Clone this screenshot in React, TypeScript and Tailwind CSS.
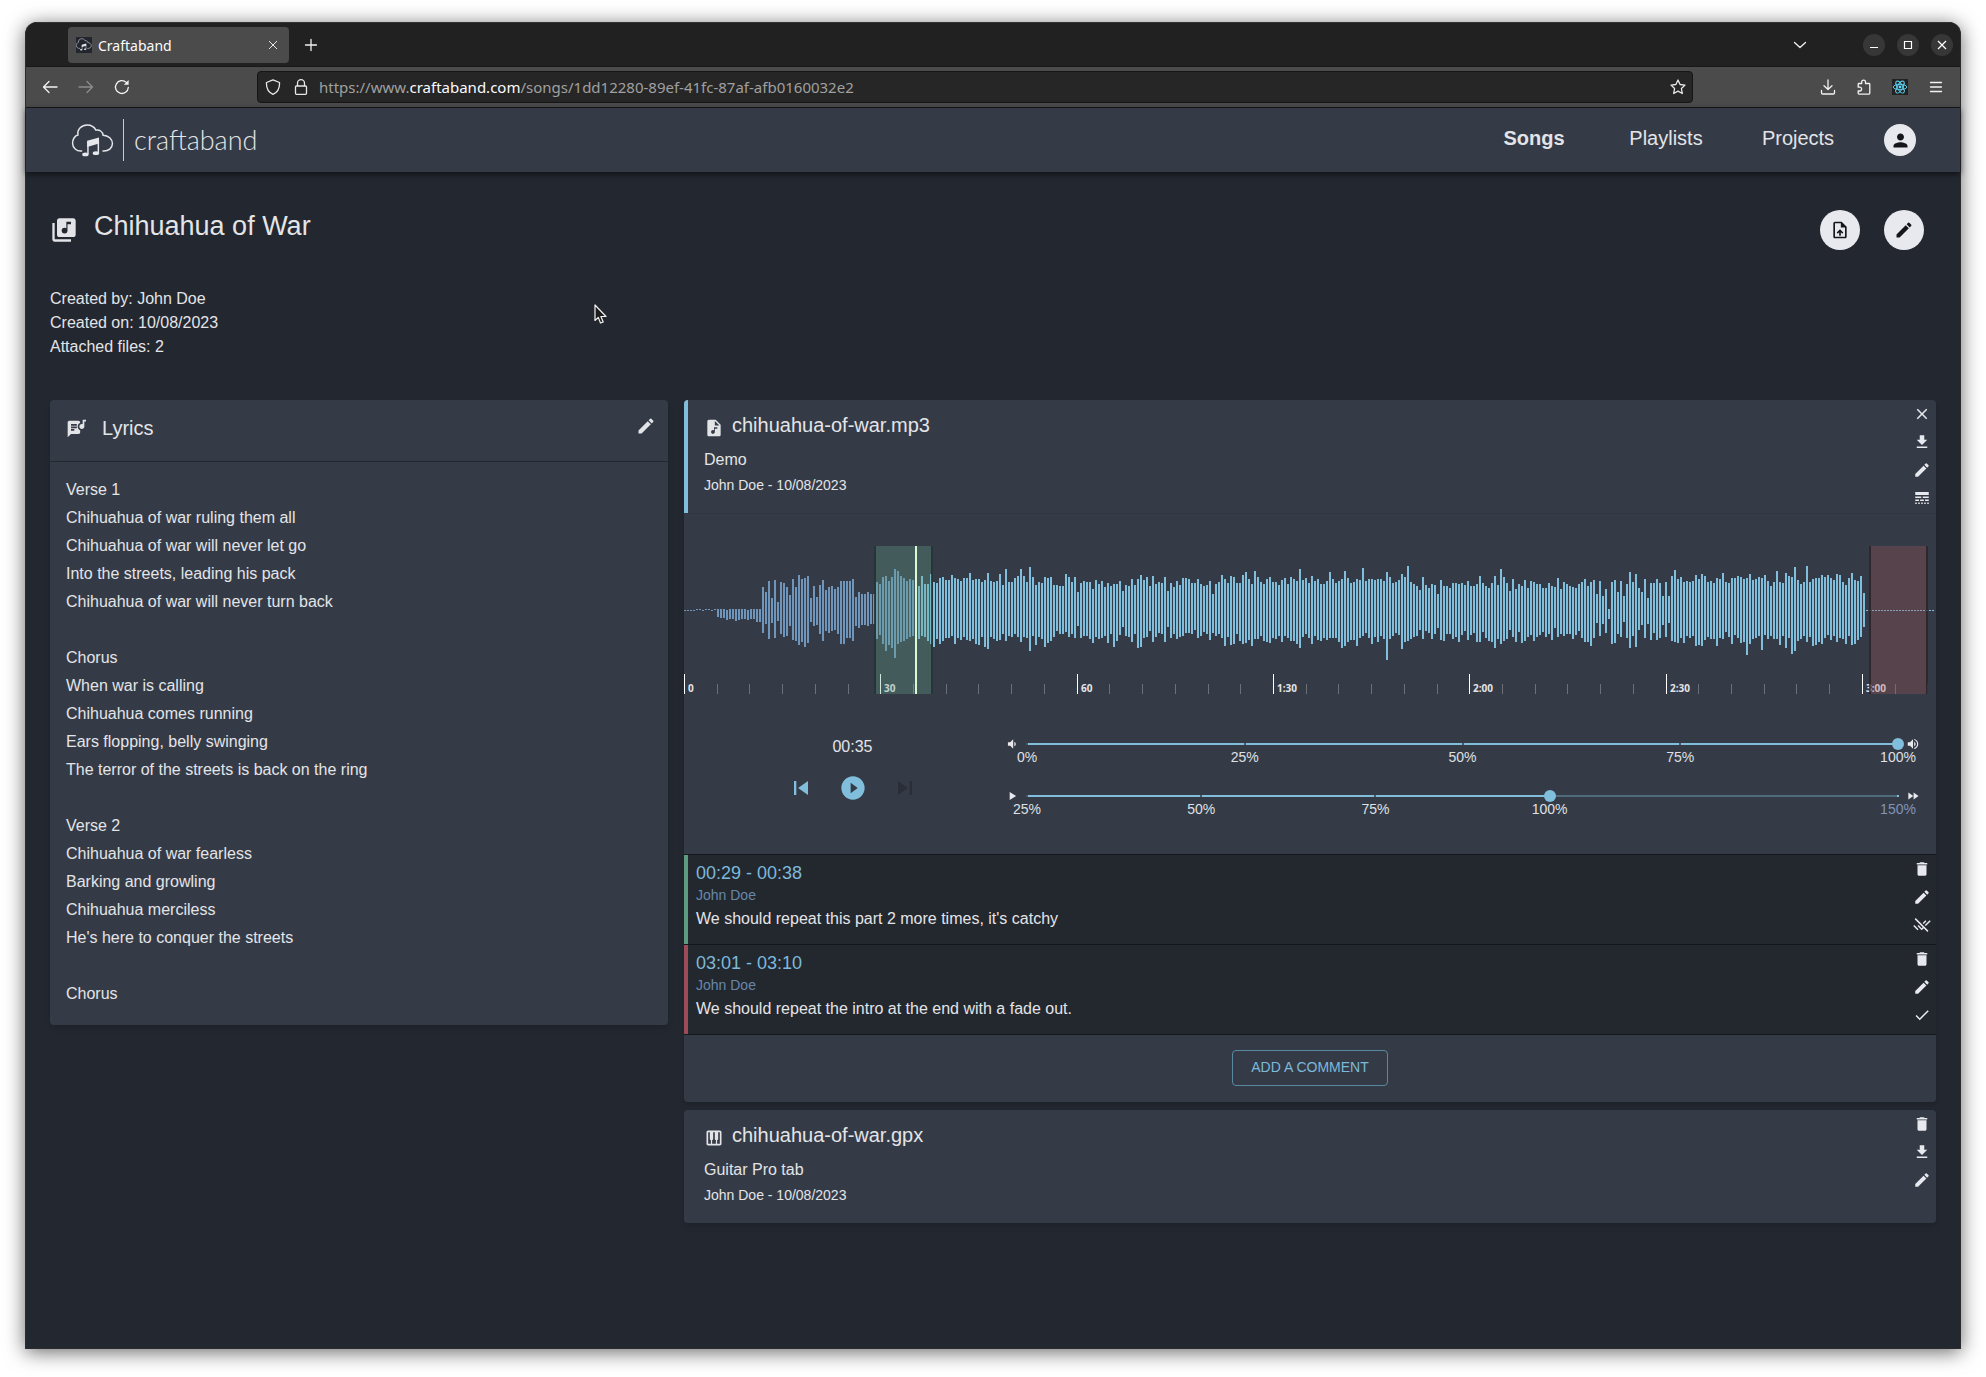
import { useState, type ReactNode } from 'react'
import {
  MdAudioFile,
  MdCheck,
  MdClose,
  MdDelete,
  MdEdit,
  MdFastForward,
  MdFileDownload,
  MdLibraryMusic,
  MdLineStyle,
  MdLyrics,
  MdPerson,
  MdPiano,
  MdPlayArrow,
  MdPlayCircleFilled,
  MdRemoveDone,
  MdSkipNext,
  MdSkipPrevious,
  MdUploadFile,
  MdVolumeDown,
  MdVolumeUp,
} from 'react-icons/md'

const lyrics = [
  'Verse 1',
  'Chihuahua of war ruling them all',
  'Chihuahua of war will never let go',
  'Into the streets, leading his pack',
  'Chihuahua of war will never turn back',
  '',
  'Chorus',
  'When war is calling',
  'Chihuahua comes running',
  'Ears flopping, belly swinging',
  'The terror of the streets is back on the ring',
  '',
  'Verse 2',
  'Chihuahua of war fearless',
  'Barking and growling',
  'Chihuahua merciless',
  "He's here to conquer the streets",
  '',
  'Chorus',
]

// alternating up / down amplitude of each bar
const peaks = [
  0, 1, 0, 1, 0, 1, 0, 1, 1, 0, 1, 0, 0, 1, 1, 0, 1, 0, 0, 1, 1, 0,
  1, 7, 1, 8, 1, 8, 0, 10, 1, 9, 1, 9, 1, 11, 1, 10, 1, 9, 1, 9, 0, 10, 1, 9, 1, 9, 1, 12, 1, 12,
  23, 23, 18, 14, 29, 29, 12, 13, 30, 28, 8, 11, 28, 24, 27, 27, 23, 26, 15, 16,
  31, 30, 23, 31, 35, 35, 31, 32, 32, 37, 34, 33, 12, 12, 24, 16, 13, 15, 25, 24,
  30, 31, 20, 21, 23, 23, 24, 21, 21, 20, 23, 24, 29, 34, 29, 34, 29, 28, 29, 28, 31, 31,
  13, 16, 18, 18, 16, 15, 16, 15, 18, 16, 16, 14, 16, 14,
  28, 29, 26, 25, 33, 34, 34, 41, 29, 35, 33, 38, 41, 48, 39, 34, 34, 32, 32, 31, 29, 29, 31, 27, 30, 26, 29, 28,
  24, 29, 34, 26, 26, 27, 26, 31, 36, 34, 28, 37, 27, 29, 32, 34, 33, 31, 30, 28, 30, 28, 35, 26, 32, 34, 31, 28,
  29, 30, 32, 27, 32, 30, 37, 31, 30, 29, 31, 34, 31, 35, 28, 27, 30, 37, 37, 39, 29, 27, 28, 29, 29, 31, 36, 30,
  25, 24, 41, 31, 28, 26, 28, 27, 32, 24, 34, 27, 41, 32, 34, 27, 28, 28, 43, 41, 33, 26, 25, 35, 28, 27, 27, 29,
  33, 37, 32, 33, 33, 31, 25, 27, 25, 21, 24, 24, 24, 24, 36, 22, 33, 27, 28, 24, 33, 28, 18, 16, 27, 28, 29, 26,
  28, 26, 28, 29, 21, 33, 30, 27, 26, 29,
  29, 28, 23, 26, 27, 33, 24, 24, 26, 37, 26, 31, 29, 25, 19, 17, 25, 26, 24, 27, 31, 32, 25, 24, 31, 38, 35, 37,
  30, 28, 33, 27, 24, 21, 34, 32, 26, 27, 28, 23, 27, 24, 33, 32, 19, 17, 27, 28, 23, 24, 29, 29, 25, 27, 32, 26,
  32, 23, 31, 23, 27, 24, 27, 20, 31, 28, 26, 26, 24, 22, 25, 24, 29, 30, 16, 23, 26, 26, 28, 24, 35, 28, 31, 36,
  27, 27, 34, 35, 33, 34, 27, 24, 27, 31, 35, 34, 38, 33, 31, 30, 26, 36, 39, 29, 33, 29, 28, 26, 26, 31, 31, 32,
  33, 33, 28, 28, 28, 29, 25, 26, 30, 32, 32, 26, 26, 28, 33, 31, 31, 31, 29, 34, 41, 38, 30, 27, 32, 24, 27, 28,
  34, 34, 29, 26, 31, 30, 26, 31, 26, 28, 29, 30, 38, 28, 31, 28, 27, 28, 29, 32, 31, 38, 39, 36, 32, 32, 27, 30,
  28, 30, 31, 36, 30, 28, 42, 26, 29, 23, 31, 28, 31, 34, 30, 27, 31, 32, 31, 26, 29, 29, 38, 50, 33, 29, 27, 26,
  28, 23, 30, 25, 36, 39, 33, 32, 44, 31, 28, 29, 26, 27, 24, 26, 20, 20, 33, 29, 25, 21, 22, 23, 26, 29, 25, 24,
  16, 18, 30, 30, 24, 31, 24, 24, 22, 24, 27, 29, 27, 27, 26, 32, 27, 25, 25, 21, 29, 30, 24, 25, 24, 23, 26, 32,
  34, 32, 27, 22, 24, 28, 22, 31, 27, 32, 34, 38, 25, 29, 41, 34, 33, 31, 27, 29, 19, 20, 31, 27, 21, 32, 26, 22,
  24, 33, 30, 31, 22, 27, 29, 25, 28, 31, 26, 27, 26, 25, 22, 22, 22, 27, 27, 24, 24, 30, 23, 18, 32, 27, 21, 24,
  28, 26, 26, 24, 24, 24, 23, 29, 22, 25, 26, 21, 28, 28, 31, 32, 24, 32, 28, 36, 30, 28, 16, 13, 29, 26, 14, 14,
  21, 23, 1, 9, 28, 34, 30, 33, 18, 24, 29, 27, 14, 12, 26, 28, 38, 38, 28, 26, 36, 37, 22, 20, 18, 15, 31, 28,
  12, 14, 27, 30, 27, 23, 31, 30, 27, 28, 14, 15, 28, 27, 14, 13, 34, 31, 40, 32, 31, 33, 33, 28, 28, 33, 29, 26,
  28, 28, 29, 26, 35, 36, 31, 35, 36, 36, 34, 30, 28, 27, 29, 29, 27, 29, 32, 36, 31, 28, 37, 29, 28, 22, 27, 27,
  32, 34, 32, 25, 34, 28, 33, 33, 31, 32, 32, 45, 36, 34, 30, 29, 31, 28, 33, 26, 32, 40, 35, 25, 29, 29, 24, 26,
  28, 29, 39, 29, 28, 35, 27, 26, 37, 38, 34, 28, 33, 44, 43, 41, 30, 31, 26, 29, 28, 26, 44, 32, 28, 27, 31, 36,
  32, 35, 32, 32, 35, 34, 33, 28, 35, 25, 32, 30, 30, 26, 36, 32, 35, 28, 28, 29, 25, 34, 32, 26, 37, 35, 30, 34,
  29, 30, 34, 27, 17, 17,
]

const BAR_COUNT = 417
const PLAYED_BARS = 77
const timeLabels = ['0', '30', '60', '1:30', '2:00', '2:30', '3:00']

function Waveform() {
  const bars = Array.from({ length: BAR_COUNT }, (_, i) => [peaks[i * 2] ?? 0, peaks[i * 2 + 1] ?? 1])
  const ticks = Array.from({ length: 39 }, (_, i) => i)

  return (
    <svg viewBox="0 0 1252 148" className="block w-full" role="img" aria-label="Waveform" shapeRendering="crispEdges">
      {bars.map(([up, down], i) => (
        <rect key={i} x={i * 3} y={64 - up} width={2} height={up + down} fill={i < PLAYED_BARS ? '#6f95ba' : '#80bedb'} />
      ))}
      {ticks.map((i) => {
        const major = i % 6 === 0
        const x = Math.round(i * 32.72)
        return (
          <rect
            key={i}
            x={x}
            y={major ? 128 : 138}
            width={1}
            height={major ? 20 : 10}
            fill={major ? '#ffffff' : '#6d7078'}
          />
        )
      })}
      {timeLabels.map((label, i) => (
        <text key={label} x={Math.round(i * 196.33) + 4} y={146} fill="#e3e4e8" className="font-['Open_Sans',sans-serif] text-[10px] font-bold">
          {label}
        </text>
      ))}
      <rect x={190} y={0} width={59} height={148} fill="#64a88f" opacity={0.3} />
      <rect x={190} y={0} width={2} height={148} fill="#1f2d2f" opacity={0.8} />
      <rect x={247} y={0} width={2} height={148} fill="#1f2d2f" opacity={0.8} />
      <rect x={1185} y={0} width={59} height={148} fill="#a3555a" opacity={0.3} />
      <rect x={1185} y={0} width={2} height={148} fill="#211a1f" opacity={0.7} />
      <rect x={1242} y={0} width={2} height={148} fill="#211a1f" opacity={0.7} />
      <rect x={231} y={0} width={2} height={148} fill="#dcf7d4" />
    </svg>
  )
}

function CloudLogo({ className }: { className?: string }) {
  return (
    <svg viewBox="0 -1 44 36" className={className} fill="none" stroke="#e6e7eb" strokeWidth={1.5} aria-hidden="true">
      <path
        d="M10.300 27.800C5 28.300 1 24.500 1 19.800 1 15.500 3.500 12 6.500 11.300 5.500 5.500 10.500 1 16 1c4.500 0 7.500 2.300 9 5.300 3.500-.8 7 1.500 7.300 5.200 5.500.3 9.700 4 9.700 8.700 0 4.500-4 8-9.700 7.600"
        strokeLinecap="round"
      />
      <path d="M16 17.300 28.200 14v6.200L16 23.600z" fill="#e6e7eb" stroke="none" />
      <path d="M16.800 18v13M27.500 17v13" />
      <ellipse cx="14.200" cy="31.300" rx="3.300" ry="1.900" fill="#e6e7eb" stroke="none" />
      <ellipse cx="25" cy="30" rx="3.300" ry="1.900" fill="#e6e7eb" stroke="none" />
    </svg>
  )
}

type ChromeButtonProps = { label: string; children: ReactNode; className?: string; color?: string }

function ChromeButton({ label, children, className = '', color = 'text-[#f2f2f2]' }: ChromeButtonProps) {
  return (
    <button aria-label={label} className={`flex size-9 items-center justify-center ${color} ${className}`}>
      <svg width="16" height="16" viewBox="0 0 16 16" fill="none" stroke="currentColor" strokeWidth="1.3" strokeLinecap="round" strokeLinejoin="round">
        {children}
      </svg>
    </button>
  )
}

function WindowButton({ label, children }: { label: string; children: ReactNode }) {
  return (
    <button aria-label={label} className="flex size-[22px] items-center justify-center rounded-full bg-[#373737] text-white">
      <svg width="10" height="10" viewBox="0 0 10 10" fill="none" stroke="currentColor" strokeWidth="1.2">
        {children}
      </svg>
    </button>
  )
}

function TabBar() {
  return (
    <div className="flex h-11 items-center border-t border-[#333333] bg-[#212121] pt-px pr-[7px] pl-[42px]">
      <div className="flex h-9 w-[221px] items-center rounded bg-[#4b4b4b] pr-2 pl-2">
        <span className="mr-1.5 flex size-4 items-center justify-center bg-[#22272f]">
          <CloudLogo className="w-4" />
        </span>
        <span className="flex-1 text-[14px] text-[#fbfbfe]">Craftaband</span>
        <button aria-label="Close tab" className="flex size-4 items-center justify-center text-[#e8e8e8]">
          <svg width="8" height="8" viewBox="0 0 8 8" stroke="currentColor">
            <path d="M0 0l8 8M8 0L0 8" />
          </svg>
        </button>
      </div>
      <ChromeButton label="New tab" className="ml-1">
        <path d="M8 2.500v11M2.500 8h11" />
      </ChromeButton>
      <ChromeButton label="List all tabs" className="mr-[45px] ml-auto">
        <path d="M2.500 5.500 8 10.500l5.500-5" />
      </ChromeButton>
      <div className="flex gap-3">
        <WindowButton label="Minimize">
          <path d="M1 7.500h8" />
        </WindowButton>
        <WindowButton label="Maximize">
          <path d="M1.500 1.500h7v7h-7z" />
        </WindowButton>
        <WindowButton label="Close">
          <path d="M1 1l8 8M9 1L1 9" />
        </WindowButton>
      </div>
    </div>
  )
}

function AddressBar() {
  return (
    <div className="flex h-[42px] items-center border-y border-[#181818] bg-[#4b4b4b] pr-1.5 pl-1.5">
      <ChromeButton label="Back">
        <path d="M15 8H1.500M7 2.500 1.500 8 7 13.500" />
      </ChromeButton>
      <ChromeButton label="Forward" color="text-[#8c8c8c]">
        <path d="M1 8h13.500M9 2.500 14.500 8 9 13.500" />
      </ChromeButton>
      <ChromeButton label="Reload">
        <path d="M14.300 8.500A6.400 6.400 0 1 1 12.300 3.400" />
        <path d="M14.600 1v4.800H9.800z" fill="currentColor" stroke="none" />
      </ChromeButton>
      <div className="mr-[117px] ml-[117px] flex h-8 flex-1 items-center rounded border border-[#161616] bg-[#262626] pr-1 pl-[7px] text-[#e8e8e8]">
        <svg width="16" height="16" viewBox="0 0 16 16" fill="none" stroke="currentColor" strokeWidth="1.300" strokeLinejoin="round" aria-hidden="true">
          <path d="M8 .8 14.500 3.500C14.800 8.500 13 13 8 15.300 3 13 1.200 8.500 1.500 3.500z" />
        </svg>
        <svg width="16" height="16" viewBox="0 0 16 16" fill="none" stroke="currentColor" strokeWidth="1.300" className="ml-3" aria-hidden="true">
          <rect x="2.500" y="7" width="11" height="8.300" rx="1" />
          <path d="M4.500 7V4.200a3.500 3.500 0 0 1 7 0V7" />
        </svg>
        <p className="ml-2.5 min-w-0 flex-1 truncate text-[15px] text-[#a0a0a0]">
          https://www.<span className="text-[#fbfbfe]">craftaband.com</span>/songs/1dd12280-89ef-41fc-87af-afb0160032e2
        </p>
        <button aria-label="Bookmark this page" className="flex size-5 items-center justify-center">
          <svg width="16" height="16" viewBox="0 0 16 16" fill="none" stroke="currentColor" strokeWidth="1.300" strokeLinejoin="round">
            <path d="M8 1l2.100 4.500 4.900.6-3.600 3.400.9 5L8 12.100 3.700 14.500l.9-5L1 6.100l4.900-.6z" />
          </svg>
        </button>
      </div>
      <ChromeButton label="Downloads">
        <path d="M8 1v9.500M4 6.800 8 10.500l4-3.700M1.500 11.500v2.300c0 .7.500 1.200 1.200 1.200h10.600c.7 0 1.200-.5 1.200-1.200v-2.300" />
      </ChromeButton>
      <ChromeButton label="Extensions">
        <path d="M2.500 4.500h3.200V3a1.900 1.900 0 0 1 3.800 0v1.500H13c.5 0 .8.300.8.800v9c0 .500-.3.800-.8.800H3c-.5 0-.8-.3-.8-.8V12h1.500a1.900 1.900 0 0 0 0-3.800H2.200V4.800" />
      </ChromeButton>
      <button aria-label="React Developer Tools" className="flex size-9 items-center justify-center">
        <svg width="16" height="16" viewBox="0 0 16 16" fill="none" stroke="#61dafb" strokeWidth=".9">
          <rect width="16" height="16" fill="#222222" stroke="none" />
          <ellipse cx="8" cy="8" rx="6.800" ry="2.700" />
          <ellipse cx="8" cy="8" rx="6.800" ry="2.700" transform="rotate(60 8 8)" />
          <ellipse cx="8" cy="8" rx="6.800" ry="2.700" transform="rotate(120 8 8)" />
          <circle cx="8" cy="8" r="1.400" fill="#61dafb" stroke="none" />
        </svg>
      </button>
      <ChromeButton label="Open menu">
        <path d="M2.500 3.500h11M2.500 8h11M2.500 12.500h11" />
      </ChromeButton>
    </div>
  )
}

function Navbar() {
  return (
    <header className="relative flex h-16 items-center justify-between bg-[#353b46] pr-11 pl-[45px] shadow-[0_2px_6px_rgba(0,0,0,0.6)]">
      <a href="#" className="flex items-center">
        <CloudLogo className="h-[35px] w-11" />
        <span className="mr-2.5 ml-2 h-[42px] w-px bg-[#c9cbd0]" />
        <span className="font-['Lato',sans-serif] text-[27px] leading-8 font-light text-[#e3e4e8]">craftaband</span>
      </a>
      <div className="flex items-center">
        <nav className="flex pb-1 text-xl leading-6 text-[#e3e4e8]">
          <a href="#" className="w-[132px] text-center font-bold">Songs</a>
          <a href="#" className="w-[132px] text-center">Playlists</a>
          <a href="#" className="w-[132px] text-center">Projects</a>
        </nav>
        <button aria-label="Account" className="ml-5 flex size-8 items-center justify-center rounded-full bg-[#e8e9ee] text-[#14161a]">
          <MdPerson size={21} />
        </button>
      </div>
    </header>
  )
}

function IconButton({ label, children }: { label: string; children: ReactNode }) {
  return (
    <button aria-label={label} className="flex size-7 items-center justify-center text-lg text-[#e8e9ee]">
      {children}
    </button>
  )
}

function RoundButton({ label, children }: { label: string; children: ReactNode }) {
  return (
    <button aria-label={label} className="flex size-10 items-center justify-center rounded-full bg-[#e8e9ee] text-xl text-[#14161a]">
      {children}
    </button>
  )
}

type SliderProps = {
  label: string
  min: number
  max: number
  marks: number[]
  initial: number
  before: ReactNode
  after: ReactNode
}

function MarkedSlider({ label, min, max, marks, initial, before, after }: SliderProps) {
  const [value, setValue] = useState(initial)
  const percent = (n: number) => `${((n - min) / (max - min)) * 100}%`

  return (
    <div className="flex gap-2 text-sm leading-[14px] text-[#e8e9ee]">
      <span className="flex h-3 items-center">{before}</span>
      <div className="flex-1">
        <div className="relative h-3">
          <div className="absolute inset-x-0 top-[5px] h-0.5 bg-[#4f697d]" />
          <div className="absolute top-[5px] left-0 h-0.5 bg-[#80bedb]" style={{ width: percent(value) }} />
          {marks.map((mark) => (
            <span
              key={mark}
              className={`absolute top-[5px] h-0.5 w-0.5 -translate-x-1/2 ${mark > value ? 'bg-[#80bedb]' : 'bg-[#4a5767]'}`}
              style={{ left: percent(mark) }}
            />
          ))}
          <input
            type="range"
            aria-label={label}
            min={min}
            max={max}
            value={value}
            onChange={(e) => setValue(Number(e.target.value))}
            className="absolute top-0 -left-1.5 h-3 w-[calc(100%+12px)] cursor-pointer appearance-none bg-transparent [&::-webkit-slider-thumb]:size-3 [&::-webkit-slider-thumb]:appearance-none [&::-webkit-slider-thumb]:rounded-full [&::-webkit-slider-thumb]:bg-[#80bedb]"
          />
        </div>
        <div className="relative h-[14px]">
          {marks.map((mark) => (
            <span
              key={mark}
              className={`absolute -translate-x-1/2 ${mark > value ? 'text-[#8093b8]' : 'text-[#dfe0e4]'}`}
              style={{ left: percent(mark) }}
            >
              {mark}%
            </span>
          ))}
        </div>
      </div>
      <span className="flex h-3 items-center">{after}</span>
    </div>
  )
}

type FileHeaderProps = { icon: ReactNode; name: string; type: string; active?: boolean; children: ReactNode }

function FileHeader({ icon, name, type, active, children }: FileHeaderProps) {
  return (
    <div className={`flex justify-between rounded-t ${active ? 'border-l-4 border-[#80bedb] pl-4' : 'pl-5'}`}>
      <div className="pt-3 pb-[18px]">
        <h2 className="flex items-center gap-2 text-xl leading-[26px]">
          <span className="pt-1.5">{icon}</span>
          {name}
        </h2>
        <p className="mt-2.5 leading-6">{type}</p>
        <p className="mt-[3px] text-sm leading-5">John Doe - 10/08/2023</p>
      </div>
      <div className="flex flex-col">{children}</div>
    </div>
  )
}

function Comment({ time, text, color, resolve }: { time: string; text: string; color: string; resolve: ReactNode }) {
  return (
    <li className="flex justify-between border-t border-[#14171b] bg-[#23272e]">
      <div className={`border-l-4 pt-1.5 pb-[13px] pl-2 ${color}`}>
        <p className="text-lg leading-6 text-[#7cb9da]">{time}</p>
        <p className="text-sm leading-5 text-[#6787aa]">John Doe</p>
        <p className="mt-0.5 leading-6">{text}</p>
      </div>
      <div className="flex flex-col">
        <IconButton label="Delete comment"><MdDelete /></IconButton>
        <IconButton label="Edit comment"><MdEdit /></IconButton>
        {resolve}
      </div>
    </li>
  )
}

function Player() {
  return (
    <div className="border-t border-[#31353f] pt-8">
      <Waveform />
      <div className="grid grid-cols-4 px-4 pt-[41px] pb-[38px]">
        <div className="flex flex-col items-center">
          <span className="leading-6">00:35</span>
          <div className="mt-[15px] flex gap-6 text-[28px] text-[#80bedb]">
            <button aria-label="Previous"><MdSkipPrevious /></button>
            <button aria-label="Play"><MdPlayCircleFilled /></button>
            <button aria-label="Next" disabled className="text-[#2a2e38]"><MdSkipNext /></button>
          </div>
        </div>
        <div className="col-span-3 flex flex-col gap-[26px] pt-[3px]">
          <MarkedSlider
            label="Volume"
            min={0}
            max={100}
            marks={[0, 25, 50, 75, 100]}
            initial={100}
            before={<MdVolumeDown />}
            after={<MdVolumeUp />}
          />
          <MarkedSlider
            label="Playback speed"
            min={25}
            max={150}
            marks={[25, 50, 75, 100, 150]}
            initial={100}
            before={<MdPlayArrow />}
            after={<MdFastForward />}
          />
        </div>
      </div>
    </div>
  )
}

export default function App() {
  return (
    <div className="flex min-h-screen bg-white px-[25px] pt-[22px] pb-7">
      <div className="relative flex flex-1 flex-col rounded-t-xl border-x border-b border-[#2b2c30] bg-[#23272f] font-['Liberation_Sans',Arial,sans-serif] text-[#e3e4e8] shadow-[0_3px_20px_rgba(0,0,0,0.6)]">
        <div className="overflow-hidden rounded-t-xl font-['Noto_Sans',sans-serif]">
          <TabBar />
          <AddressBar />
        </div>
        <Navbar />

        <main className="px-6 pt-[38px] pb-12">
          <div className="flex items-center justify-between pr-3">
            <h1 className="flex items-center gap-4 text-[27px] leading-8">
              <MdLibraryMusic size={28} />
              <span className="pb-2">Chihuahua of War</span>
            </h1>
            <div className="flex gap-6">
              <RoundButton label="Upload file"><MdUploadFile /></RoundButton>
              <RoundButton label="Edit song"><MdEdit /></RoundButton>
            </div>
          </div>

          <div className="mt-[37px] leading-6">
            <p>Created by: John Doe</p>
            <p>Created on: 10/08/2023</p>
            <p>Attached files: 2</p>
          </div>

          <div className="mt-[41px] grid grid-cols-3 items-start gap-4">
            {/* Lyrics */}
            <section className="rounded bg-[#353b46] shadow-md">
              <div className="flex items-center justify-between border-b border-[#23272f] pt-3 pr-2 pb-[17px] pl-4">
                <h2 className="flex items-center gap-4 text-xl leading-8">
                  <span className="pt-0.5">
                    <MdLyrics size={20} />
                  </span>
                  Lyrics
                </h2>
                <button aria-label="Edit lyrics" className="mb-1 flex size-7 items-center justify-center text-xl">
                  <MdEdit />
                </button>
              </div>
              <div className="px-4 pt-[14px] pb-[17px]">
                {lyrics.map((line, i) => (
                  <p key={i} className="h-7 leading-7">{line}</p>
                ))}
              </div>
            </section>

            {/* Files */}
            <div className="col-span-2 flex flex-col gap-2">
              <section className="rounded bg-[#353b46] shadow-md">
                <FileHeader icon={<MdAudioFile />} name="chihuahua-of-war.mp3" type="Demo" active>
                  <IconButton label="Close file"><MdClose /></IconButton>
                  <IconButton label="Download"><MdFileDownload /></IconButton>
                  <IconButton label="Edit file"><MdEdit /></IconButton>
                  <IconButton label="Toggle comments"><MdLineStyle /></IconButton>
                </FileHeader>
                <Player />
                <ul>
                  <Comment
                    time="00:29 - 00:38"
                    text="We should repeat this part 2 more times, it's catchy"
                    color="border-[#5d9c83]"
                    resolve={<IconButton label="Reopen"><MdRemoveDone /></IconButton>}
                  />
                  <Comment
                    time="03:01 - 03:10"
                    text="We should repeat the intro at the end with a fade out."
                    color="border-[#9d4b59]"
                    resolve={<IconButton label="Resolve"><MdCheck /></IconButton>}
                  />
                </ul>
                <div className="flex justify-center border-t border-[#14171b] pt-[15px] pb-4">
                  <button className="h-9 rounded border border-[#5a88a1] px-[18px] pb-0.5 text-sm text-[#7cb9da]">ADD A COMMENT</button>
                </div>
              </section>

              <section className="rounded bg-[#353b46] shadow-md">
                <FileHeader icon={<MdPiano />} name="chihuahua-of-war.gpx" type="Guitar Pro tab">
                  <IconButton label="Delete file"><MdDelete /></IconButton>
                  <IconButton label="Download"><MdFileDownload /></IconButton>
                  <IconButton label="Edit file"><MdEdit /></IconButton>
                </FileHeader>
              </section>
            </div>
          </div>
        </main>

        {/* Mouse pointer */}
        <svg width="13" height="20" viewBox="0 0 13 20" className="pointer-events-none absolute top-[282px] left-[568px]" aria-hidden="true">
          <path d="M1 1v15.500l3.300-3.100 2.200 5.600 2.700-1.100-2.300-5.400h5.100z" fill="#1c1c1c" stroke="#f2f2f2" strokeWidth="1.200" strokeLinejoin="round" />
        </svg>
      </div>
    </div>
  )
}
